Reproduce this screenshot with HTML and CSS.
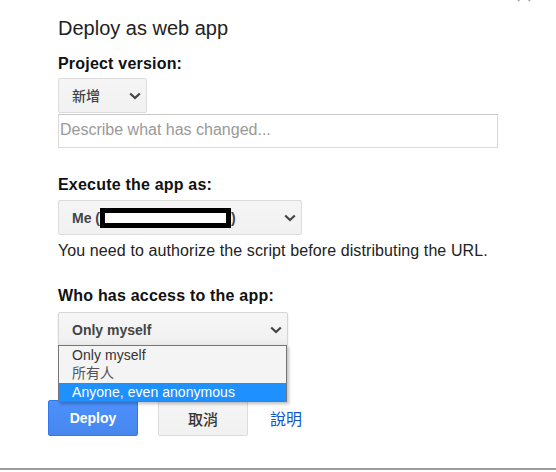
FILE: index.html
```html
<!DOCTYPE html>
<html lang="en">
<head>
<meta charset="utf-8">
<title>Deploy as web app</title>
<link rel="stylesheet" href="styles.css">
</head>
<body>
<div class="dialog">
  <svg class="close" width="16" height="14" viewBox="0 0 16 14" aria-hidden="true"><path d="M2 0 L14 13 M14 0 L2 13" stroke="#b0b0b0" stroke-width="2" fill="none"/></svg>
  <h1 class="title">Deploy as web app</h1>

  <div class="label">Project version:</div>
  <div class="select s1">
    <span class="sel-text cjk-sel">新增</span>
    <svg class="chev" width="12" height="8" viewBox="0 0 12 8"><polyline points="1.2,1.5 6,6 10.8,1.5" fill="none" stroke="#444" stroke-width="2.2"/></svg>
  </div>
  <input class="desc" type="text" placeholder="Describe what has changed...">

  <div class="label gap-lg">Execute the app as:</div>
  <div class="select s2">
    <span class="sel-text">Me (<span class="redact"></span>)</span>
    <svg class="chev" width="12" height="8" viewBox="0 0 12 8"><polyline points="1.2,1.5 6,6 10.8,1.5" fill="none" stroke="#444" stroke-width="2.2"/></svg>
  </div>
  <p class="note">You need to authorize the script before distributing the URL.</p>

  <div class="label gap-md">Who has access to the app:</div>
  <div class="select-wrap">
    <div class="select s3 focused">
      <span class="sel-text">Only myself</span>
      <svg class="chev" width="12" height="8" viewBox="0 0 12 8"><polyline points="1.2,1.5 6,6 10.8,1.5" fill="none" stroke="#444" stroke-width="2.2"/></svg>
    </div>
    <ul class="options">
      <li class="opt">Only myself</li>
      <li class="opt cjk">所有人</li>
      <li class="opt active">Anyone, even anonymous</li>
    </ul>
  </div>

  <div class="actions">
    <button class="btn primary">Deploy</button>
    <button class="btn cjk-btn">取消</button>
    <a class="help" href="#">說明</a>
  </div>
</div>
<div class="footer-line"></div>
</body>
</html>
```

FILE: styles.css
```css
* { box-sizing: border-box; }

html, body {
  margin: 0;
  padding: 0;
  background: #fff;
  width: 556px;
  height: 472px;
  overflow: hidden;
}

body {
  font-family: "Liberation Sans", Arial, "Noto Sans CJK TC", sans-serif;
  color: #222;
}

.dialog {
  position: relative;
  padding: 16px 0 0 58px;
  display: flex;
  flex-direction: column;
  align-items: flex-start;
}

.close {
  position: absolute;
  left: 516px;
  top: -12px;
}

.title {
  margin: 0;
  font-size: 20px;
  line-height: 24px;
  font-weight: normal;
  color: #222;
}

.label {
  margin-top: 14px;
  font-size: 16px;
  line-height: 20px;
  font-weight: bold;
  color: #111;
  letter-spacing: 0.2px;
}

.gap-lg { margin-top: 27px; }
.gap-md { margin-top: 25px; }

.select {
  display: flex;
  align-items: center;
  height: 35px;
  padding: 0 5px 0 13px;
  border: 1px solid #dcdcdc;
  border-radius: 2px;
  background: linear-gradient(#f5f5f5, #f1f1f1);
  color: #444;
  font-size: 14px;
  line-height: 16px;
  font-weight: bold;
}

.sel-text {
  display: flex;
  align-items: center;
  white-space: nowrap;
}

.cjk-sel { font-weight: 500; }

.chev {
  margin-left: auto;
  flex: none;
}

.s1 { width: 89px; margin-top: 4px; }
.s2 { width: 244px; margin-top: 5px; }
.s3 { width: 230px; }

.redact {
  display: inline-block;
  width: 131px;
  height: 20px;
  border: 5px solid #000;
  background: #fff;
}

.desc {
  display: block;
  margin: 1px 0 0;
  width: 440px;
  height: 34px;
  padding: 0 0 2px 1px;
  border: 1px solid #d9d9d9;
  border-top-color: #c8c8c8;
  border-radius: 0;
  font-family: inherit;
  font-size: 16px;
  color: #222;
  background: #fff;
  outline: none;
}

.desc::placeholder { color: #999; }

.note {
  margin: 6px 0 0;
  font-size: 16px;
  line-height: 20px;
  color: #222;
  letter-spacing: 0.1px;
}

.select-wrap {
  position: relative;
  margin-top: 6px;
}

.focused {
  border-color: #d6d6d6;
  background: linear-gradient(#f6f6f6 0%, #f2f2f2 75%, #e9e9e9 100%);
  box-shadow: 0 1px 2px rgba(0, 0, 0, 0.12);
}

.options {
  position: absolute;
  left: 0;
  top: 33px;
  width: 229px;
  margin: 0;
  padding: 0;
  list-style: none;
  background: #f4f4f4;
  border: 1px solid #767676;
  box-shadow: 2px 2px 3px rgba(0, 0, 0, 0.25);
  z-index: 2;
}

.opt {
  height: 18.3px;
  line-height: 18.3px;
  padding-left: 13px;
  font-size: 14px;
  color: #333;
  white-space: nowrap;
  letter-spacing: 0.05px;
}

.opt.cjk { color: #555; }

.opt.active {
  background: #1e90ff;
  color: #fff;
}

.actions {
  display: flex;
  align-items: center;
  margin: 53px 0 0 -10px;
}

.btn {
  width: 90px;
  height: 36px;
  margin: 0 20px 0 0;
  padding: 0;
  border: 1px solid #dcdcdc;
  border-radius: 2px;
  background: linear-gradient(#f5f5f5, #f1f1f1);
  color: #333;
  font-family: inherit;
  font-size: 14px;
  font-weight: bold;
}

.btn.cjk-btn { font-weight: 500; font-size: 15px; }

.btn.primary {
  border-color: #3079ed;
  background: linear-gradient(#4d90fe, #4787ed);
  color: #fff;
}

.help {
  margin-left: 2px;
  font-size: 16px;
  color: #1155cc;
  text-decoration: none;
}

.footer-line {
  margin-top: 32px;
  height: 2px;
  background: #9c9c9c;
}
```
